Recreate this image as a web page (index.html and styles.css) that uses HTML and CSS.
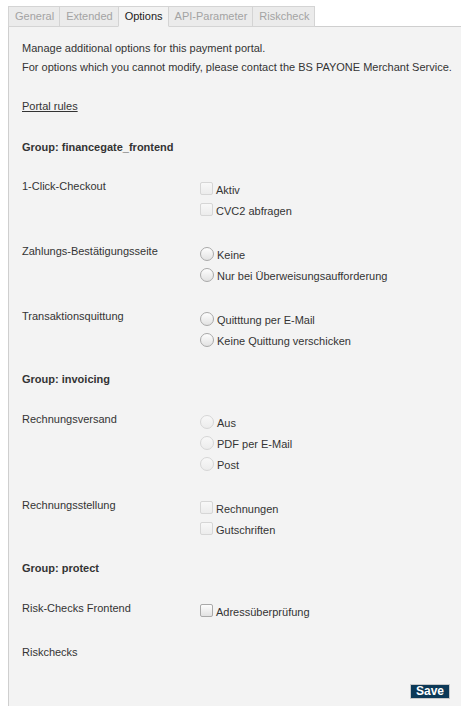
FILE: index.html
```html
<!DOCTYPE html>
<html>
<head>
<meta charset="utf-8">
<link rel="stylesheet" href="styles.css">
</head>
<body>
<div class="tabs">
  <span class="tab">General</span>
  <span class="tab">Extended</span>
  <span class="tab active">Options</span>
  <span class="tab">API-Parameter</span>
  <span class="tab">Riskcheck</span>
</div>
<div class="panel">
  <p class="intro">Manage additional options for this payment portal.</p>
  <p class="intro">For options which you cannot modify, please contact the BS PAYONE Merchant Service.</p>
  <a class="rules">Portal rules</a>

  <div class="group first">Group: financegate_frontend</div>
  <div class="row">
    <div class="label">1-Click-Checkout</div>
    <div class="opts">
      <label class="opt"><input type="checkbox" class="cb" disabled>Aktiv</label>
      <label class="opt"><input type="checkbox" class="cb" disabled>CVC2 abfragen</label>
    </div>
  </div>
  <div class="row">
    <div class="label">Zahlungs-Bestätigungsseite</div>
    <div class="opts">
      <label class="opt"><input type="radio" class="rb" name="z">Keine</label>
      <label class="opt"><input type="radio" class="rb" name="z">Nur bei Überweisungsaufforderung</label>
    </div>
  </div>
  <div class="row">
    <div class="label">Transaktionsquittung</div>
    <div class="opts">
      <label class="opt"><input type="radio" class="rb" name="t">Quitttung per E-Mail</label>
      <label class="opt"><input type="radio" class="rb" name="t">Keine Quittung verschicken</label>
    </div>
  </div>

  <div class="group">Group: invoicing</div>
  <div class="row">
    <div class="label">Rechnungsversand</div>
    <div class="opts">
      <label class="opt"><input type="radio" class="rb" name="r" disabled>Aus</label>
      <label class="opt"><input type="radio" class="rb" name="r" disabled>PDF per E-Mail</label>
      <label class="opt"><input type="radio" class="rb" name="r" disabled>Post</label>
    </div>
  </div>
  <div class="row">
    <div class="label">Rechnungsstellung</div>
    <div class="opts">
      <label class="opt"><input type="checkbox" class="cb" disabled>Rechnungen</label>
      <label class="opt"><input type="checkbox" class="cb" disabled>Gutschriften</label>
    </div>
  </div>

  <div class="group">Group: protect</div>
  <div class="row">
    <div class="label">Risk-Checks Frontend</div>
    <div class="opts">
      <label class="opt"><input type="checkbox" class="cb">Adressüberprüfung</label>
    </div>
  </div>
  <div class="row">
    <div class="label">Riskchecks</div>
  </div>

  <div class="actions"><button class="save">Save</button></div>
</div>
</body>
</html>
```
FILE: styles.css
```css
html, body {
  margin: 0;
  padding: 0;
  background: #fff;
}
body {
  font-family: Arial, "Liberation Sans", sans-serif;
  font-size: 11px;
  color: #333;
  padding: 6px 0 0 8px;
}
.tabs {
  display: flex;
  border-bottom: 1px solid #cfcfcf;
  height: 20px;
}
.tab {
  box-sizing: border-box;
  height: 21px;
  line-height: 19px;
  padding: 0 5px 0 6px;
  border: 1px solid #d4d4d4;
  margin-right: -1px;
  background: #ebebeb;
  color: #a3a3a3;
}
.tab.active {
  background: #f3f3f3;
  color: #222;
  border-bottom-color: #f3f3f3;
  position: relative;
  z-index: 1;
}
.panel {
  background: #f3f3f3;
  border-left: 1px solid #cfcfcf;
  padding: 12px 8px 9px 13px;
  min-height: 680px;
  box-sizing: border-box;
}
.intro {
  margin: 0;
  line-height: 19px;
  white-space: nowrap;
}
.rules {
  display: block;
  margin-top: 20px;
  line-height: 19px;
  text-decoration: underline;
  color: #333;
}
.group {
  font-weight: bold;
  line-height: 19px;
  margin-top: 18px;
}
.group.first {
  margin-top: 22px;
}
.row {
  display: flex;
  margin-top: 20px;
}
.group + .row {
  margin-top: 21px;
}
.group.first + .row {
  margin-top: 20px;
}
.label {
  width: 178px;
  flex: none;
  line-height: 19px;
}
.opts {
  display: flex;
  flex-direction: column;
  padding-top: 3px;
}
.opt {
  display: flex;
  align-items: flex-start;
  line-height: 21px;
  height: 21px;
}
.cb, .rb {
  -webkit-appearance: none;
  appearance: none;
  box-sizing: border-box;
  width: 13px;
  height: 13px;
  margin: 2px 3px 0 0;
  border: 1px solid #a9a9a9;
  background: linear-gradient(#fdfdfd, #e2e2e2);
  flex: none;
}
.cb {
  border-radius: 2px;
}
.rb {
  border-radius: 50%;
  width: 14px;
  height: 14px;
  margin-right: 3px;
}
.cb:disabled, .rb:disabled {
  border-color: #d6d6d6;
  background: linear-gradient(#f8f8f8, #ececec);
}
.actions {
  display: flex;
  justify-content: flex-end;
  margin-top: 22px;
  padding-right: 3px;
}
.save {
  font-family: Arial, "Liberation Sans", sans-serif;
  font-size: 12px;
  font-weight: bold;
  color: #fff;
  background: #0c3957;
  border: 1px solid #c8c8c8;
  height: 15px;
  line-height: 13px;
  padding: 0 5px;
  margin: 0;
}
```
